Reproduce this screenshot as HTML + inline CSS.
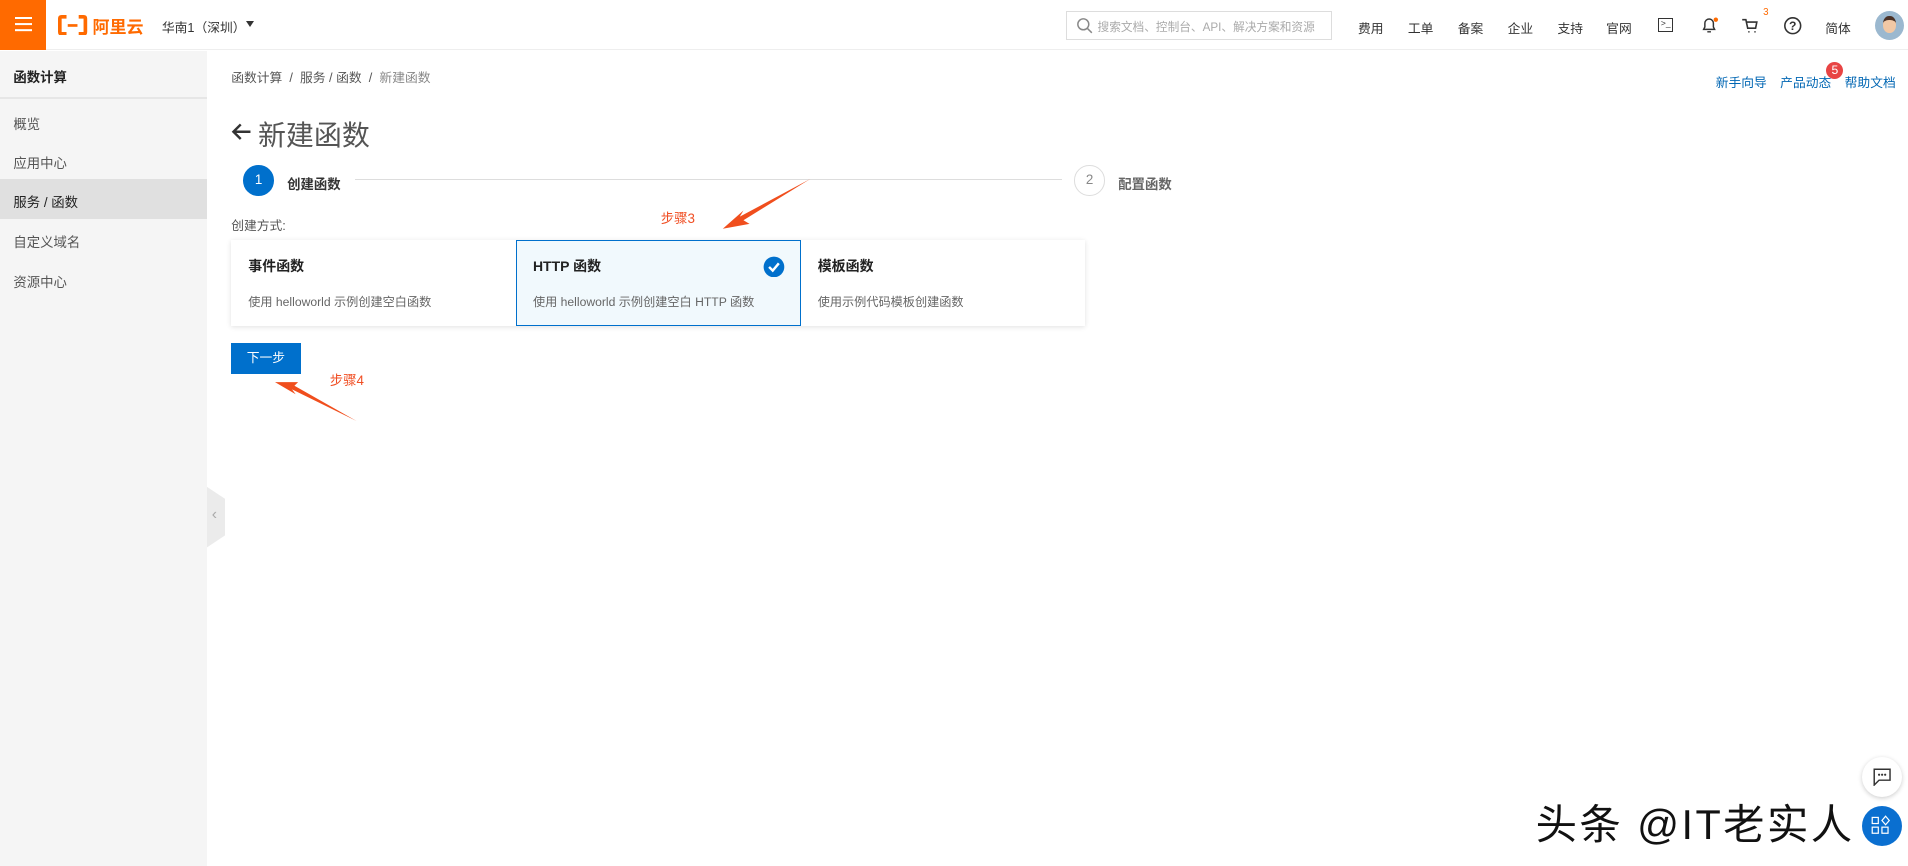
<!DOCTYPE html>
<html><head><meta charset="utf-8"><style>
*{margin:0;padding:0;box-sizing:border-box}
html,body{width:1908px;height:866px;overflow:hidden;background:#fff}
#r{zoom:1.2168;width:1568px;height:712px;position:relative;font-family:"Liberation Sans","Noto Sans CJK SC",sans-serif;color:#333;font-size:11px}
.a{position:absolute;white-space:nowrap}
</style></head><body><div id="r">
<!-- header -->
<div class="a" style="left:0;top:0;width:1568px;height:41px;border-bottom:1px solid #eee;background:#fff"></div>
<div class="a" style="left:0;top:0;width:38px;height:41px;background:#ff6a00"></div>
<div class="a" style="left:12px;top:14px;width:14px;height:2px;background:#fff;box-shadow:0 5px 0 #fff,0 10px 0 #fff"></div>
<svg class="a" style="left:48px;top:12px" width="24" height="17"><path d="M7 1.5 H3 Q1.5 1.5 1.5 3 V14 Q1.5 15.5 3 15.5 H7 M17 1.5 H21 Q22.5 1.5 22.5 3 V14 Q22.5 15.5 21 15.5 H17" stroke="#ff6a00" stroke-width="3" fill="none"/><rect x="8" y="7.5" width="8" height="2.2" fill="#ff6a00"/></svg>
<div class="a" style="left:76px;top:11px;font-size:14px;font-weight:bold;color:#ff6a00">阿里云</div>
<div class="a" style="left:133px;top:14px;font-size:10.5px;color:#333">华南1（深圳）</div>
<div class="a" style="left:202px;top:17px;border:4px solid transparent;border-top:5px solid #333"></div>
<div class="a" style="left:876px;top:9px;width:219px;height:24px;border:1px solid #ddd"></div>
<svg class="a" style="left:884px;top:14px" width="14" height="14"><circle cx="6" cy="6" r="4.5" stroke="#888" fill="none" stroke-width="1.2"/><line x1="9.5" y1="9.5" x2="13" y2="13" stroke="#888" stroke-width="1.2"/></svg>
<div class="a" style="left:902px;top:15px;color:#aaa;font-size:9.6px">搜索文档、控制台、API、解决方案和资源</div>
<div class="a" style="left:1116px;top:15px;font-size:10.5px">费用</div>
<div class="a" style="left:1157px;top:15px;font-size:10.5px">工单</div>
<div class="a" style="left:1198px;top:15px;font-size:10.5px">备案</div>
<div class="a" style="left:1239px;top:15px;font-size:10.5px">企业</div>
<div class="a" style="left:1280px;top:15px;font-size:10.5px">支持</div>
<div class="a" style="left:1320px;top:15px;font-size:10.5px">官网</div>
<div class="a" style="left:1363px;top:15px;width:12px;height:11px;border:1px solid #333"></div>
<div class="a" style="left:1365px;top:15px;font-size:7px">&gt;_</div>
<svg class="a" style="left:1397px;top:13px" width="16" height="16"><path d="M3 11 L4 9 V6 A3.5 3.5 0 0 1 11 6 V9 L12 11 Z M6 13 H9" stroke="#333" fill="none" stroke-width="1.2"/><circle cx="13" cy="3" r="1.8" fill="#ff6a00"/></svg>
<svg class="a" style="left:1431px;top:13px" width="16" height="16"><path d="M1 3 H4 L5.5 10 H12 L13 5 H4.5 M6 13 h1 M11 13 h1" stroke="#333" fill="none" stroke-width="1.3"/></svg>
<div class="a" style="left:1449px;top:6px;font-size:8px;color:#ff6a00">3</div>
<svg class="a" style="left:1465px;top:13px" width="16" height="16"><circle cx="8" cy="8" r="6.5" stroke="#333" fill="none" stroke-width="1.3"/><text x="8" y="11.5" font-size="10" text-anchor="middle" font-weight="bold" fill="#333" font-family="Liberation Sans">?</text></svg>
<div class="a" style="left:1500px;top:15px;font-size:10.5px">简体</div>
<div class="a" style="left:1541px;top:9px;width:24px;height:24px;border-radius:50%;background:#9bb8cf;overflow:hidden"><div style="margin:4px auto 0;width:11px;height:14px;border-radius:45%;background:#f1c8a5;border-top:4px solid #4a3126"></div></div>
<!-- sidebar -->
<div class="a" style="left:0;top:42px;width:170px;height:670px;background:#f5f5f5"></div>
<div class="a" style="left:11px;top:54px;font-weight:bold;font-size:11px;color:#222">函数计算</div>
<div class="a" style="left:0;top:80px;width:170px;height:1px;background:#e6e6e6"></div>
<div class="a" style="left:11px;top:93px;color:#555">概览</div>
<div class="a" style="left:11px;top:125px;color:#555">应用中心</div>
<div class="a" style="left:0;top:147px;width:170px;height:33px;background:#e0e0e0"></div>
<div class="a" style="left:11px;top:157px;color:#222">服务 / 函数</div>
<div class="a" style="left:11px;top:190px;color:#555">自定义域名</div>
<div class="a" style="left:11px;top:223px;color:#555">资源中心</div>
<div class="a" style="left:170px;top:400px;width:15px;height:50px;background:#ebebeb;clip-path:polygon(0 0,100% 20%,100% 80%,0 100%)"></div>
<div class="a" style="left:174px;top:416px;color:#aaa;font-size:13px">&lsaquo;</div>
<!-- content -->
<div class="a" style="left:190px;top:55px;font-size:10.5px;color:#555">函数计算 &nbsp;/&nbsp; 服务 / 函数 &nbsp;/&nbsp; <span style="color:#888">新建函数</span></div>
<div class="a" style="left:1410px;top:59px;font-size:10.5px;color:#0066b3">新手向导</div>
<div class="a" style="left:1463px;top:59px;font-size:10.5px;color:#0066b3">产品动态</div>
<div class="a" style="left:1501px;top:51px;width:14px;height:14px;border-radius:50%;background:#e84444;color:#fff;font-size:10px;text-align:center;line-height:14px">5</div>
<div class="a" style="left:1516px;top:59px;font-size:10.5px;color:#0066b3">帮助文档</div>
<svg class="a" style="left:190px;top:100px" width="18" height="16"><path d="M16 8 H2 M8 2 L2 8 L8 14" stroke="#333" fill="none" stroke-width="2"/></svg>
<div class="a" style="left:212px;top:94px;font-size:23px;color:#555">新建函数</div>
<div class="a" style="left:200px;top:136px;width:25px;height:25px;border-radius:50%;background:#0070cc;color:#fff;text-align:center;line-height:25px;font-size:11px">1</div>
<div class="a" style="left:236px;top:142px;font-weight:bold;color:#333">创建函数</div>
<div class="a" style="left:292px;top:147px;width:581px;height:1px;background:#ddd"></div>
<div class="a" style="left:883px;top:136px;width:25px;height:25px;border-radius:50%;border:1px solid #ddd;color:#888;text-align:center;line-height:23px;font-size:11px">2</div>
<div class="a" style="left:919px;top:142px;font-weight:bold;color:#666">配置函数</div>
<div class="a" style="left:190px;top:177px;color:#555;font-size:10.5px">创建方式:</div>
<div class="a" style="left:190px;top:197px;width:702px;height:71px;box-shadow:0 1px 4px rgba(0,0,0,.12);background:#fff"></div>
<div class="a" style="left:424px;top:197px;width:234px;height:71px;border:1px solid #0070cc;background:#f1f9fd"></div>
<div class="a" style="left:204px;top:210px;font-weight:bold;font-size:11.5px;color:#222">事件函数</div>
<div class="a" style="left:204px;top:240px;font-size:10px;color:#666">使用 helloworld 示例创建空白函数</div>
<div class="a" style="left:438px;top:210px;font-size:11.5px;color:#222;font-weight:bold">HTTP 函数</div>
<div class="a" style="left:438px;top:240px;font-size:10px;color:#666">使用 helloworld 示例创建空白 HTTP 函数</div>
<svg class="a" style="left:627px;top:210px" width="18" height="18"><circle cx="9" cy="9" r="8.5" fill="#0070cc"/><path d="M5 9 L8 12 L13 6" stroke="#fff" stroke-width="2" fill="none"/></svg>
<div class="a" style="left:672px;top:210px;font-weight:bold;font-size:11.5px;color:#222">模板函数</div>
<div class="a" style="left:672px;top:240px;font-size:10px;color:#666">使用示例代码模板创建函数</div>
<div class="a" style="left:190px;top:282px;width:57px;height:25px;background:#0070cc;color:#fff;text-align:center;line-height:25px;font-size:10.5px">下一步</div>
<div class="a" style="left:543px;top:170px;color:#f04e23;font-size:11px">步骤3</div>
<div class="a" style="left:271px;top:303px;color:#f04e23;font-size:11px">步骤4</div>
<svg class="a" style="left:0;top:0" width="1568" height="712"><path d="M666 147 L608 178 L611 173 L594 188 L616 184 L611 181 Z" fill="#f04e1d"/><path d="M293 346 L240 320 L243 324 L226 314 L245 314 L242 317 Z" fill="#f04e1d"/></svg>
<!-- watermark -->
<div class="a" style="left:1262px;top:650px;font-size:34px;letter-spacing:2px;color:#111">头条 @IT老实人</div>
<div class="a" style="left:1530px;top:622px;width:33px;height:33px;border-radius:50%;background:#fff;box-shadow:0 1px 4px rgba(0,0,0,.2)"></div>
<svg class="a" style="left:1539px;top:631px" width="15" height="15"><path d="M1 1 H14 V10 H5 L1 14 Z" stroke="#333" fill="none" stroke-width="1.2"/><circle cx="5" cy="5.5" r=".9" fill="#333"/><circle cx="7.5" cy="5.5" r=".9" fill="#333"/><circle cx="10" cy="5.5" r=".9" fill="#333"/></svg>
<div class="a" style="left:1530px;top:662px;width:33px;height:33px;border-radius:50%;background:#0a6fd0"></div>
<svg class="a" style="left:1538px;top:670px" width="17" height="17"><rect x="1" y="2" width="5" height="5" stroke="#fff" fill="none"/><path d="M12 1 L15 4.5 L12 8 L9 4.5 Z" stroke="#fff" fill="none"/><rect x="1" y="10" width="5" height="5" stroke="#fff" fill="none"/><rect x="9" y="10" width="5" height="5" stroke="#fff" fill="none"/></svg>
</div></body></html>
